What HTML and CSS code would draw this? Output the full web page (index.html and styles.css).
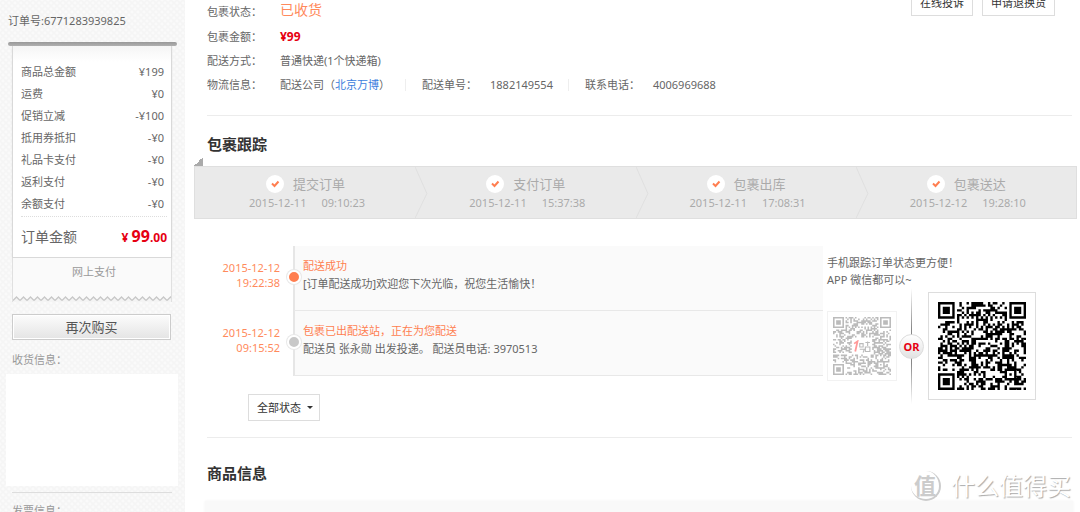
FILE: index.html
```html
<!DOCTYPE html>
<html lang="zh-CN">
<head>
<meta charset="utf-8">
<title>订单详情</title>
<link rel="stylesheet" href="styles.css">
</head>
<body>
<div class="page">
  <aside class="sidebar">
    <p class="order-no">订单号:6771283939825</p>
    <div class="slot"></div>
    <section class="receipt">
      <dl class="fees">
        <div><dt>商品总金额</dt><dd>¥199</dd></div>
        <div><dt>运费</dt><dd>¥0</dd></div>
        <div><dt>促销立减</dt><dd>-¥100</dd></div>
        <div><dt>抵用券抵扣</dt><dd>-¥0</dd></div>
        <div><dt>礼品卡支付</dt><dd>-¥0</dd></div>
        <div><dt>返利支付</dt><dd>-¥0</dd></div>
        <div><dt>余额支付</dt><dd>-¥0</dd></div>
      </dl>
      <div class="total"><span>订单金额</span><strong>¥ <b>99</b><i>.00</i></strong></div>
    </section>
    <div class="pay">
      网上支付
      <svg class="teeth" height="6" aria-hidden="true">
        <defs><pattern id="tooth" width="7" height="6" patternUnits="userSpaceOnUse">
          <path d="M0 5L3.5 1L7 5V6H0Z" fill="#f4f4f4"/><path d="M0 4.5L3.5 1L7 4.5" fill="none" stroke="#c8c8c8" stroke-width="1.4"/>
        </pattern></defs>
        <rect width="100%" height="6" fill="url(#tooth)"/>
      </svg>
    </div>
    <button class="rebuy" type="button">再次购买</button>
    <h3 class="side-title">收货信息：</h3>
    <div class="address"></div>
    <h3 class="side-title invoice">发票信息：</h3>
  </aside>

  <main class="main">
    <section class="summary">
      <dl class="info">
        <div><dt>包裹状态：</dt><dd class="status">已收货</dd></div>
        <div><dt>包裹金额：</dt><dd class="amount">¥99</dd></div>
        <div><dt>配送方式：</dt><dd>普通快递(1个快递箱)</dd></div>
        <div><dt>物流信息：</dt><dd class="logistics">
          <span>配送公司（<a href="#">北京万博</a>）</span>
          <span class="cell"><span>配送单号：</span><span>1882149554</span></span>
          <span class="cell"><span>联系电话：</span><span>4006969688</span></span>
        </dd></div>
      </dl>
      <div class="actions">
        <button type="button">在线投诉</button>
        <button type="button">申请退换货</button>
      </div>
    </section>

    <h2 class="title">包裹跟踪</h2>
    <div class="corner"></div>
    <ol class="steps">
      <li><div class="step-name"><span class="tick"><svg viewBox="0 0 18 18"><path d="M6 8.5L8.5 11L12.5 6.5"/></svg></span>提交订单</div><div class="step-time"><span>2015-12-11</span><span>09:10:23</span></div><svg class="chevron" viewBox="0 0 13 52"><path d="M0 0L12 27L0 52"/></svg></li>
      <li><div class="step-name"><span class="tick"><svg viewBox="0 0 18 18"><path d="M6 8.5L8.5 11L12.5 6.5"/></svg></span>支付订单</div><div class="step-time"><span>2015-12-11</span><span>15:37:38</span></div><svg class="chevron" viewBox="0 0 13 52"><path d="M0 0L12 27L0 52"/></svg></li>
      <li><div class="step-name"><span class="tick"><svg viewBox="0 0 18 18"><path d="M6 8.5L8.5 11L12.5 6.5"/></svg></span>包裹出库</div><div class="step-time"><span>2015-12-11</span><span>17:08:31</span></div><svg class="chevron" viewBox="0 0 13 52"><path d="M0 0L12 27L0 52"/></svg></li>
      <li><div class="step-name"><span class="tick"><svg viewBox="0 0 18 18"><path d="M6 8.5L8.5 11L12.5 6.5"/></svg></span>包裹送达</div><div class="step-time"><span>2015-12-12</span><span>19:28:10</span></div></li>
    </ol>

    <section class="track">
      <ul class="timeline">
        <li class="current">
          <time>2015-12-12<br>19:22:38</time>
          <div class="event"><h4>配送成功</h4><p>[订单配送成功]欢迎您下次光临，祝您生活愉快！</p></div>
        </li>
        <li>
          <time>2015-12-12<br>09:15:52</time>
          <div class="event"><h4>包裹已出配送站，正在为您配送</h4><p>配送员 张永勋 出发投递。 配送员电话: 3970513</p></div>
        </li>
      </ul>
      <div class="mobile">
        <p>手机跟踪订单状态更方便！<br>APP 微信都可以~</p>
        <div class="codes">
          <div class="code code-small">
            <svg class="qr" data-seed="11" data-hole="1" viewBox="0 0 37 37" role="img" aria-label="APP 二维码"></svg>
            <svg class="brand" viewBox="0 0 16 12" aria-hidden="true"><path d="M1 3L4 1L2 10" stroke="#f99" stroke-width="1.6"/><path d="M6 3h3v3h-3zM6 8h4l-1 3M11 2h4M13 1v4M11 6h4v4h-4z" stroke="#bbb"/></svg>
          </div>
          <div class="or"><span>OR</span></div>
          <div class="code code-large">
            <svg class="qr" data-seed="5" viewBox="0 0 37 37" role="img" aria-label="微信二维码"></svg>
          </div>
        </div>
      </div>
    </section>

    <label class="filter">
      <select aria-label="状态筛选"><option>全部状态</option></select>
      <svg viewBox="0 0 6 3" aria-hidden="true"><path d="M0 0H6L3 3Z"/></svg>
    </label>

    <h2 class="title goods">商品信息</h2>
    <div class="goods-panel"></div>
  </main>
</div>
<div class="watermark">
  <span class="seal">值</span>
  <span>什么值得买</span>
</div>
<script src="qr.js"></script>
</body>
</html>
```
FILE: styles.css
```css
*, *::after { box-sizing: border-box; margin: 0; padding: 0; }

body {
  height: 100vh;
  overflow: hidden;
  background: #fff;
  color: #666;
  font: 11px/16px "Noto Sans", "Noto Sans CJK SC", sans-serif;
}

button, select { font: inherit; color: #333; }
ul, ol { list-style: none; }
i { font-style: normal; }
.page { display: flex; height: 100%; }

/* Sidebar */
.sidebar {
  flex: none;
  width: 185px;
  padding: 13px 7px 0 8px;
  background-color: #f5f5f5;
  background-image:
    radial-gradient(#fafafa 1px, transparent 2px),
    radial-gradient(#fafafa 1px, transparent 2px);
  background-size: 6px 6px;
  background-position: 0 0, 3px 3px;
}
.order-no { margin-bottom: 13px; }
.slot { width: 169px; height: 4px; border-radius: 2px; background: linear-gradient(#999, #b0b0b0); }
.receipt {
  width: 160px;
  margin-left: 4px;
  padding: 15px 4px 0 8px;
  border: 1px solid #d9d9d9;
  border-top: 0;
  background: linear-gradient(#f5f5f5, #fff 16px);
  box-shadow: 0 1px 1px #ddd;
}
.fees { padding-bottom: 1px; border-bottom: 1px dotted #ddd; }
.fees div { display: flex; justify-content: space-between; padding-right: 3px; line-height: 22px; }
.total { display: flex; justify-content: space-between; align-items: center; height: 40px; font-size: 14px; }
.total strong { color: #e60012; font-size: 12px; }
.total b { font-size: 16px; font-weight: 700; }
.pay {
  position: relative;
  width: 160px;
  height: 44px;
  margin: 0 0 12px 4px;
  padding: 6px 0 0 4px;
  border: 1px solid #e0e0e0;
  border-width: 0 1px;
  background: #fafafa;
  color: #999;
  text-align: center;
}
.teeth { position: absolute; left: 0; bottom: 0; width: 100%; }
.rebuy {
  display: block;
  width: 159px;
  height: 26px;
  margin-left: 4px;
  border: 1px solid #ccc;
  box-shadow: inset 0 0 0 1px #fff;
  background: linear-gradient(#fcfcfc, #e4e4e4);
  color: #555;
  font-size: 13px;
  line-height: 20px;
}
.side-title { margin: 12px 0 6px 4px; color: #999; font-size: 11px; font-weight: 400; }
.address { width: 172px; height: 112px; margin-left: -2px; background: #fff; }
.invoice { width: 160px; margin-top: 6px; padding-top: 10px; border-top: 1px solid #ddd; }

/* Package summary */
.main { flex: 1; min-width: 0; padding: 0 3px 0 9px; }
.summary {
  display: flex;
  justify-content: space-between;
  margin: 0 5px 0 13px;
  padding-bottom: 18px;
  border-bottom: 1px solid #ececec;
}
.info div { display: flex; line-height: 24px; }
.info dt { width: 73px; }
.info .status { color: #ff8a5c; font-size: 14px; line-height: 20px; }
.info .amount { color: #e60012; font-size: 12px; font-weight: 700; }
.info a { color: #3b7ddd; text-decoration: none; }
.info div:first-child { height: 25px; }
.logistics { display: flex; align-items: center; }
.cell { display: flex; gap: 13px; margin-left: 15px; padding-left: 16px; line-height: 12px; border-left: 1px solid #eee; }
.actions { display: flex; align-items: flex-start; gap: 9px; margin: -10px 17px 0 0; }
.actions button { height: 26px; padding: 0 8px; border: 1px solid #ddd; background: #fff; white-space: nowrap; }

.title { margin-left: 13px; padding-top: 17px; color: #333; font-size: 15px; line-height: 22px; font-weight: 700; }

/* Progress steps */
.corner { width: 9px; height: 9px; margin-top: 2px; background: linear-gradient(135deg, transparent 50%, #aaa 50%); }
.steps { display: flex; height: 53px; border: 1px solid #dfdfdf; background: #eaeaea; color: #aaa; }
.steps li { position: relative; flex: 1; padding: 7px 0 0 54px; }
.step-name { display: flex; align-items: center; gap: 9px; padding-left: 17px; font-size: 13px; line-height: 20px; }
.tick { display: flex; width: 18px; height: 18px; border-radius: 50%; background: #fff; }
.tick path { fill: none; stroke: #ff7e50; stroke-width: 2; }
.step-time { display: flex; gap: 15px; line-height: 18px; }
.chevron { position: absolute; top: 0; right: -13px; width: 13px; height: 51px; }
.chevron path { fill: none; stroke: #dfdfdf; }

/* Tracking */
.track { display: flex; align-items: flex-start; margin-top: 27px; }
.timeline { flex: 1; }
.timeline li { position: relative; display: flex; height: 65px; }
.timeline time { width: 86px; padding-top: 14px; color: #ff8a5c; line-height: 15px; text-align: right; }
.event {
  flex: 1;
  margin-left: 13px;
  padding: 11px 0 0 8px;
  border-left: 2px solid #e6e6e6;
  border-bottom: 1px solid #e8e8e8;
  background: #fafafa;
  line-height: 18px;
}
.event h4 { color: #ff7e50; font-size: 11px; font-weight: 400; }
.timeline li::after {
  content: "";
  position: absolute;
  left: 93px;
  top: 24px;
  width: 14px;
  height: 14px;
  border: 2px solid #fff;
  border-radius: 50%;
  background: #c8c8c8;
  box-shadow: 0 0 0 1px #e8e8e8;
}
.timeline .current::after { background: #ff7e50; }

.mobile { flex: none; width: 250px; margin-left: 4px; padding-top: 8px; line-height: 17px; }
.codes { display: flex; align-items: center; }
.code { position: relative; display: flex; border: 1px solid #ddd; background: #fff; }
.code-small { padding: 5px; border-color: #f2f2f2; }
.code-small .qr { width: 58px; height: 58px; fill: #bbb; }
.code-large { padding: 9px; }
.code-large .qr { width: 88px; height: 88px; fill: #000; }
.brand { position: absolute; left: 25px; top: 28px; width: 18px; height: 14px; fill: none; }
.or {
  display: flex;
  align-items: center;
  justify-content: center;
  width: 25px;
  height: 116px;
  margin: 0 4px 0 2px;
  background: linear-gradient(transparent, #888 35%, #888 65%, transparent) center / 1px 100% no-repeat;
}
.or span {
  width: 25px;
  height: 25px;
  border: 1px solid #ddd;
  border-radius: 50%;
  background: linear-gradient(#fff, #e2e2e2);
  color: #e60012;
  font-weight: 700;
  line-height: 23px;
  text-align: center;
}

/* Status filter */
.filter { position: relative; display: block; width: 72px; margin: -10px 0 0 54px; }
.filter select { display: block; appearance: none; width: 100%; height: 27px; padding: 0 8px; border: 1px solid #ddd; border-radius: 0; background: #fff; }
.filter svg { position: absolute; right: 7px; top: 12px; width: 6px; height: 3px; fill: #333; }

/* Goods */
.goods { margin: 16px 5px 0 13px; padding-top: 24px; border-top: 1px solid #ececec; }
.goods-panel { height: 40px; margin: 17px 4px 0 11px; background: #f9f9f9; box-shadow: 0 0 3px #f3f3f3; }

/* Watermark */
.watermark {
  position: absolute;
  right: 9px;
  bottom: 9px;
  display: flex;
  align-items: center;
  gap: 10px;
  color: #fff;
  font-size: 24px;
  line-height: 34px;
  text-shadow: 1px 1px 1px #aaa;
}
.seal {
  width: 30px;
  height: 30px;
  border-right: 2px solid #ccc;
  border-bottom: 2px solid #ccc;
  border-radius: 50%;
  color: #ccc;
  font-size: 22px;
  font-weight: 700;
  line-height: 28px;
  text-align: center;
  text-shadow: none;
}
```
FILE: qr.js
```js
// Draws a code of 37 x 37 modules into each .qr element.
const SIZE = 37;

function square(x, y, cx, cy, rings) {
  const d = Math.max(Math.abs(x - cx), Math.abs(y - cy));
  return rings[d];
}

function moduleAt(x, y, hole, random) {
  const bit = random() < 0.5;
  const finders = [[3, 3], [SIZE - 4, 3], [3, SIZE - 4]];
  for (const [cx, cy] of finders) {
    const v = square(x, y, cx, cy, [true, true, false, true, false]);
    if (v !== undefined) return v;
  }
  const align = square(x, y, 30, 30, [true, false, true]);
  if (align !== undefined) return align;
  if (x === 6 || y === 6) return (x + y) % 2 === 0;
  if (hole && Math.abs(x - 18) < 7 && Math.abs(y - 18) < 6) return false;
  return bit;
}

document.querySelectorAll(".qr").forEach((svg) => {
  let state = Number(svg.dataset.seed) * 7919;
  const random = () => {
    state = (state * 48271) % 2147483647;
    return state / 2147483647;
  };
  let d = "";
  for (let y = 0; y < SIZE; y++) {
    for (let x = 0; x < SIZE; x++) {
      if (moduleAt(x, y, svg.dataset.hole, random)) d += `M${x} ${y}h1v1h-1z`;
    }
  }
  const path = document.createElementNS("http://www.w3.org/2000/svg", "path");
  path.setAttribute("d", d);
  svg.append(path);
});
```
